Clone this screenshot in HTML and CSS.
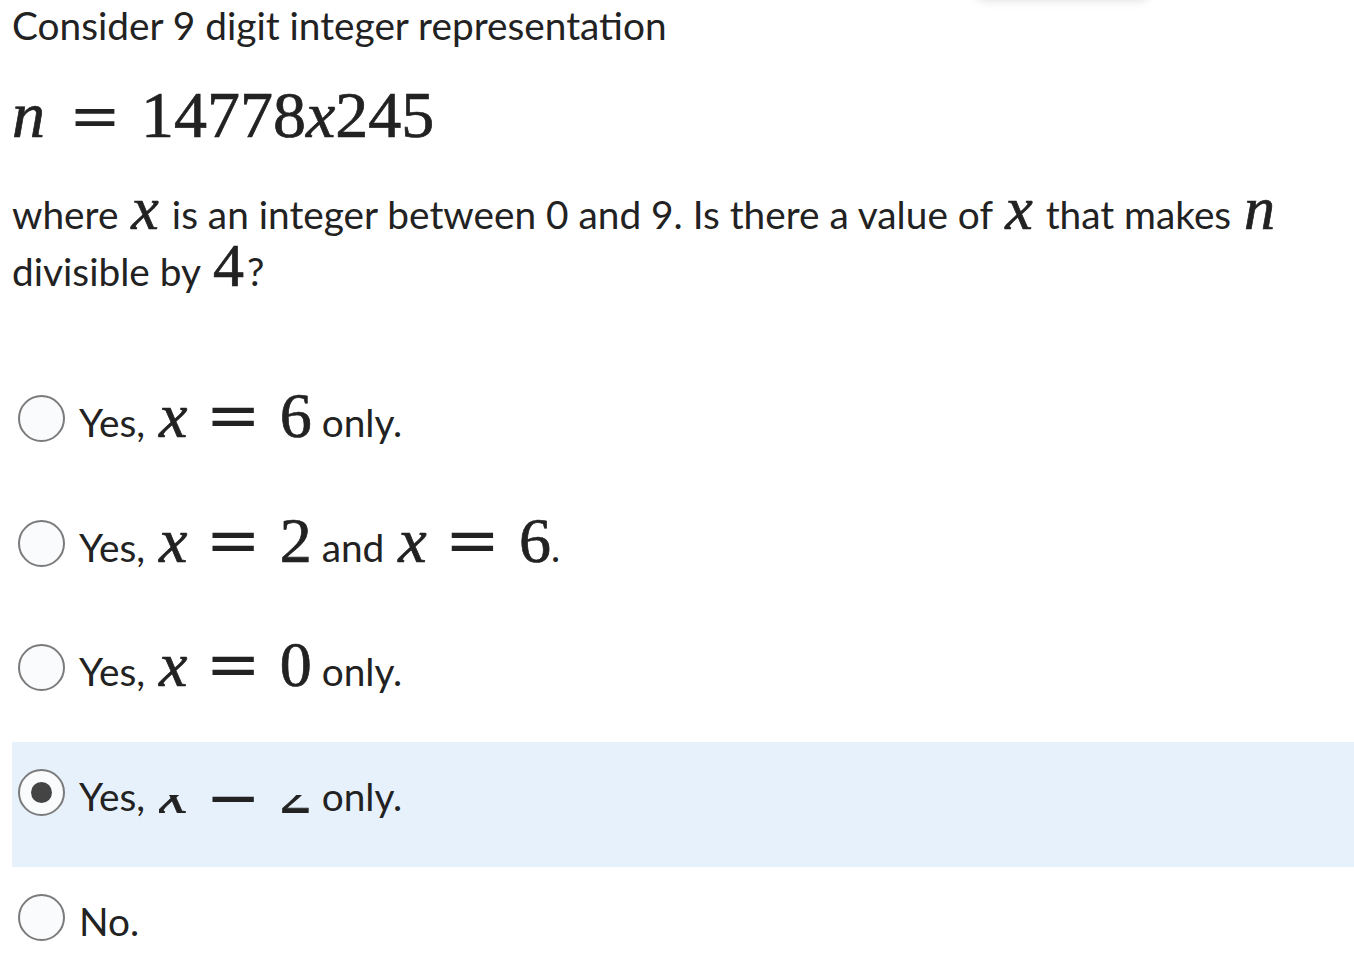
FILE: index.html
```html
<!DOCTYPE html>
<html lang="en">
<head>
<meta charset="utf-8">
<title>Quiz question</title>
<link rel="stylesheet" href="styles.css">
</head>
<body>
<div class="top-shadow"></div>
<div class="question">
  <p class="lead">Consider 9 digit integer representation</p>
  <div class="display-math"><span class="mi">n</span><span class="mo">=</span><span class="mn">14778</span><span class="mi">x</span><span class="mn">245</span></div>
  <p class="body-text">where <span class="im mi">x</span> is an integer between 0 and 9. Is there a value of <span class="im mi">x</span> that makes <span class="im mi">n</span> divisible by <span class="im mn">4</span>?</p>
</div>
<div class="answers">
  <div class="answer">
    <span class="radio"></span>
    <span class="label">Yes, <span class="am"><span class="mi">x</span><span class="mo">=</span><span class="mn">6</span></span> only.</span>
  </div>
  <div class="answer">
    <span class="radio"></span>
    <span class="label">Yes, <span class="am"><span class="mi">x</span><span class="mo">=</span><span class="mn">2</span></span> and <span class="am"><span class="mi">x</span><span class="mo">=</span><span class="mn">6</span></span>.</span>
  </div>
  <div class="answer">
    <span class="radio"></span>
    <span class="label">Yes, <span class="am"><span class="mi">x</span><span class="mo">=</span><span class="mn">0</span></span> only.</span>
  </div>
  <div class="answer selected">
    <span class="radio checked"></span>
    <span class="label">Yes, <span class="clip"><span class="clip-inner"><span class="mi">x</span><span class="mo">=</span><span class="mn">2</span></span></span> only.</span>
  </div>
  <div class="answer">
    <span class="radio"></span>
    <span class="label">No.</span>
  </div>
</div>
</body>
</html>
```

FILE: styles.css
```css
html, body {
  margin: 0;
  padding: 0;
  background: #ffffff;
}
body {
  font-family: Lato, "Liberation Sans", sans-serif;
  color: #222222;
  padding: 0 0 0 12px;
  overflow: hidden;
}
.top-shadow {
  position: absolute;
  top: -40px;
  left: 975px;
  width: 175px;
  height: 40px;
  border-radius: 10px;
  background: #fff;
  box-shadow: 0 2px 8px rgba(0, 0, 0, 0.10);
}
.question p {
  margin: 0;
}
.lead {
  font-size: 38.8px;
  line-height: 50px;
}
.mi {
  font-style: italic;
}
.mn, .mi {
  -webkit-text-stroke: 0.7px #222222;
}
.mo {
  font-family: "DejaVu Serif", "Liberation Serif", serif;
  font-style: normal;
}
.display-math {
  font-family: "Liberation Serif", "DejaVu Serif", serif;
  font-size: 66px;
  line-height: 70px;
  margin-top: 30px;
  display: flex;
  align-items: baseline;
}
.display-math .mi:first-child {
  margin-right: 24px;
}
.display-math .mo {
  font-size: 62px;
  margin-right: 20px;
}
.body-text {
  font-size: 38.8px;
  line-height: 57px;
  margin-top: 35px !important;
}
.im {
  font-family: "Liberation Serif", "DejaVu Serif", serif;
  font-size: 62px;
  line-height: 0;
  margin: 0 3px;
}
.answers {
  margin-top: 68px;
  display: flex;
  flex-direction: column;
}
.answer {
  height: 125px;
  box-sizing: border-box;
  padding: 27px 0 0 6px;
  display: flex;
  align-items: flex-start;
  gap: 14px;
}
.answer:nth-child(2) {
  height: 124px;
}
.answer.selected {
  background: #e7f1fb;
}
.radio {
  flex: none;
  box-sizing: border-box;
  width: 47px;
  height: 47px;
  border: 2px solid #7b7b7b;
  border-radius: 50%;
  background: #fafbfd;
  display: flex;
  align-items: center;
  justify-content: center;
}
.radio.checked::after {
  content: "";
  width: 21px;
  height: 21px;
  border-radius: 50%;
  background: #444444;
}
.label {
  font-size: 38.8px;
  line-height: 48px;
  padding-top: 3px;
  white-space: nowrap;
}
.am {
  font-family: "Liberation Serif", "DejaVu Serif", serif;
  font-size: 64px;
  line-height: 0;
  margin: 0 0 0 4px;
}
.am .mo, .clip-inner .mo {
  font-size: 66px;
  margin: 0 19px 0 18px;
}
.clip {
  display: inline-block;
  height: 18px;
  overflow: hidden;
  vertical-align: -2px;
  margin: 0 0 0 4px;
}
.clip-inner {
  display: block;
  font-family: "Liberation Serif", "DejaVu Serif", serif;
  font-size: 64px;
  line-height: 64px;
  margin-top: -36px;
}
```
